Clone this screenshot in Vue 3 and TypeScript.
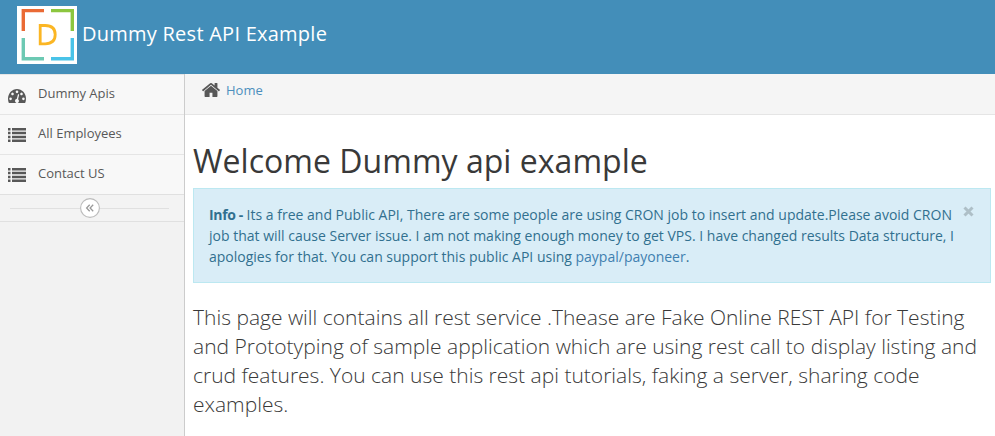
<script setup lang="ts">
interface MenuItem {
  label: string
  icon: 'gauge' | 'list'
}

const menu: MenuItem[] = [
  { label: 'Dummy Apis', icon: 'gauge' },
  { label: 'All Employees', icon: 'list' },
  { label: 'Contact US', icon: 'list' },
]
</script>

<template>
  <div class="page">
    <header class="navbar">
      <svg class="logo" viewBox="0 0 60 58">
        <rect width="60" height="58" fill="#fff" />
        <g fill="none" stroke-width="3.4">
          <path d="M6.3 25V4.6H27" stroke="#ea6a35" />
          <path d="M34 4.6H55.3V25" stroke="#8cc63f" />
          <path d="M6.3 32V52.8H27" stroke="#6cc9b3" />
          <path d="M34 52.8H55.3V32" stroke="#49c3e8" />
          <path d="M23.2 19.5H28.2C34.8 19.5 38.2 23 38.2 28.6C38.2 34.4 34.8 37.8 28.2 37.8H23.2Z" stroke="#fbb624" stroke-width="2.8" />
        </g>
      </svg>
      <span class="brand">Dummy Rest API Example</span>
    </header>
    <div class="body">
      <aside class="sidebar">
        <nav>
          <a v-for="item in menu" :key="item.label" class="item">
            <svg v-if="item.icon === 'gauge'" class="icon" viewBox="0 256 1792 1280" preserveAspectRatio="none">
              <path d="M384 1152q0-53-37.5-90.5t-90.5-37.5-90.5 37.5-37.5 90.5 37.5 90.5 90.5 37.5 90.5-37.5 37.5-90.5zm192-448q0-53-37.5-90.5t-90.5-37.5-90.5 37.5-37.5 90.5 37.5 90.5 90.5 37.5 90.5-37.5 37.5-90.5zm428 481l101-382q6-26-7.5-48.5t-38.5-29.5-48 6.5-30 39.5l-101 382q-60 5-107 43.5t-63 98.5q-20 77 20 146t117 89 146-20 89-117q16-60-6-117t-72-91zm660-33q0-53-37.5-90.5t-90.5-37.5-90.5 37.5-37.5 90.5 37.5 90.5 90.5 37.5 90.5-37.5 37.5-90.5zm-640-640q0-53-37.5-90.5t-90.5-37.5-90.5 37.5-37.5 90.5 37.5 90.5 90.5 37.5 90.5-37.5 37.5-90.5zm448 192q0-53-37.5-90.5t-90.5-37.5-90.5 37.5-37.5 90.5 37.5 90.5 90.5 37.5 90.5-37.5 37.5-90.5zm320 448q0 261-141 483-19 29-54 29h-1402q-35 0-54-29-141-221-141-483 0-182 71-348t191-286 286-191 348-71 348 71 286 191 191 286 71 348z" />
            </svg>
            <svg v-else class="icon list" viewBox="0 0 18 14">
              <path d="M0 0h2.5v2.4H0zM4 0h14v2.4H4zM0 3.8h2.5v2.5H0zM4 3.8h14v2.5H4zM0 7.7h2.5v2.5H0zM4 7.7h14v2.5H4zM0 11.6h2.5v2.4H0zM4 11.6h14v2.4H4z" />
            </svg>
            <span>{{ item.label }}</span>
          </a>
        </nav>
        <div class="toggle">
          <span class="line"></span>
          <svg class="knob" viewBox="0 0 20 20">
            <circle cx="10" cy="10" r="9.4" fill="#fff" stroke="#bbb" stroke-width="1.1" />
            <path d="M9.7 6.7L6.6 10L9.7 13.3M13.2 6.7L10.1 10L13.2 13.3" fill="none" stroke="#999" stroke-width="1.3" />
          </svg>
          <span class="line"></span>
        </div>
      </aside>
      <main class="main">
        <div class="crumbs">
          <svg class="home" viewBox="89 253 1614 1283" preserveAspectRatio="none">
            <path d="M1472 992v480q0 26-19 45t-45 19h-384v-384h-256v384h-384q-26 0-45-19t-19-45v-480q0-1 .5-3t.5-3l575-474 575 474q1 2 1 6zm223-69l-62 74q-8 9-21 11h-3q-13 0-21-7l-692-577-692 577q-12 8-24 7-13-2-21-11l-62-74q-8-10-7-23.5t11-21.5l719-599q32-26 76-26t76 26l244 204v-195q0-14 9-23t23-9h192q14 0 23 9t9 23v408l219 182q10 8 11 21.5t-7 23.5z" />
          </svg>
          <a>Home</a>
        </div>
        <div class="content">
          <h1>Welcome Dummy api example</h1>
          <div class="alert">
            <p>
              <strong>Info -</strong> Its a free and Public API, There are some people are using CRON job to insert and update.Please avoid CRON<br />
              job that will cause Server issue. I am not making enough money to get VPS. I have changed results Data structure, I<br />
              apologies for that. You can support this public API using <a>paypal/payoneer</a>.
            </p>
            <svg class="close" viewBox="0 0 11 11">
              <path d="M1.5 1.5L9.5 9.5M9.5 1.5L1.5 9.5" stroke="#aebfc7" stroke-width="3" />
            </svg>
          </div>
          <p class="lead">
            This page will contains all rest service .Thease are Fake Online REST API for Testing<br />
            and Prototyping of sample application which are using rest call to display listing and<br />
            crud features. You can use this rest api tutorials, faking a server, sharing code<br />
            examples.
          </p>
        </div>
      </main>
    </div>
  </div>
</template>

<style>
body {
  background: #fff;
}
</style>

<style scoped>
.page {
  height: 436px;
  overflow: hidden;
  display: flex;
  flex-direction: column;
  font-family: 'Open Sans', sans-serif;
  font-size: 13px;
  color: #393939;
}
.page * {
  box-sizing: border-box;
}
.navbar {
  flex: none;
  height: 74px;
  padding: 6px 17px 0;
  display: flex;
  align-items: flex-start;
  background: #438eb9;
}
.logo {
  width: 60px;
  height: 58px;
}
.brand {
  margin: 14px 0 0 5px;
  font-size: 20px;
  line-height: 28px;
  letter-spacing: 0.25px;
  color: #fff;
  white-space: nowrap;
}
.body {
  flex: 1;
  display: flex;
}
.sidebar {
  flex: none;
  width: 185px;
  background: #f2f2f2;
  border-right: 1px solid #ccc;
}
.item {
  height: 40px;
  padding-left: 8px;
  display: flex;
  align-items: flex-start;
  border-top: 1px solid #e5e5e5;
  background: #f8f8f8;
  color: #585858;
}
.icon {
  width: 18px;
  height: 14px;
  margin: 14px 12px 0 0;
  fill: #585858;
}
.icon.list {
  margin-top: 13px;
}
.item span {
  line-height: 18px;
  margin-top: 9px;
}
.toggle {
  height: 28px;
  padding: 0 15px 0 10px;
  display: flex;
  align-items: center;
  border: solid #e0e0e0;
  border-width: 1px 0;
  background: #f3f3f3;
}
.line {
  flex: 1;
  height: 1px;
  background: #e0e0e0;
}
.knob {
  width: 20px;
  height: 20px;
}
.main {
  flex: 1;
  min-width: 0;
}
.crumbs {
  height: 41px;
  padding: 9px 0 0 17px;
  display: flex;
  align-items: flex-start;
  background: #f5f5f5;
  border-bottom: 1px solid #e5e5e5;
}
.home {
  width: 18px;
  height: 14px;
  fill: #585858;
}
.crumbs a {
  margin: -2px 0 0 6px;
  line-height: 18px;
}
a {
  color: #4c8fbd;
}
.content {
  padding: 26px 4px 0 8px;
  white-space: nowrap;
}
h1 {
  margin: 0;
  font-size: 32px;
  line-height: 40px;
  font-weight: 400;
  letter-spacing: 0.03px;
}
.alert {
  height: 95px;
  margin-top: 7px;
  padding: 15px 15px 0;
  display: flex;
  justify-content: space-between;
  border: 1px solid #bce8f1;
  background: #d9edf7;
  color: #31708f;
  font-size: 14px;
  line-height: 21px;
}
.alert p {
  margin: 0;
}
.alert strong {
  letter-spacing: -0.35px;
}
.alert a {
  color: #3f80b0;
}
.close {
  width: 11px;
  height: 11px;
  margin: 2px 1px 0 0;
}
.lead {
  margin: 20px 0 0;
  font-size: 21px;
  line-height: 29px;
  font-weight: 300;
}
</style>
